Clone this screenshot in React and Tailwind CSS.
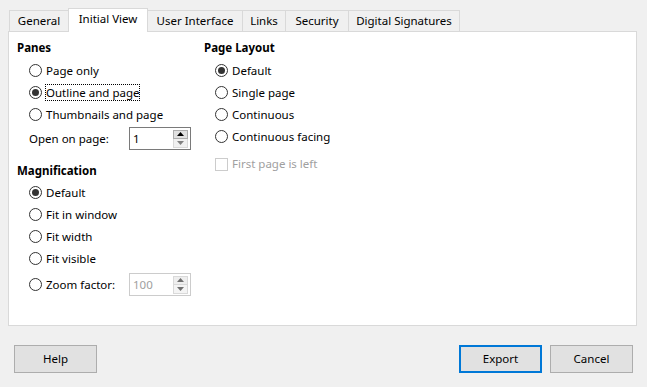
import React from "react";

const font = { fontFamily: '"Noto Sans", "Open Sans", sans-serif' };

function Radio({ label, checked, focus }) {
  return (
    <div className="flex items-center h-[22px]">
      <span className="w-[13px] h-[13px] rounded-full border border-[#333333] bg-white flex items-center justify-center shrink-0">
        {checked && <span className="w-[7px] h-[7px] rounded-full bg-[#333333]" />}
      </span>
      <span className={"ml-[4px] leading-[15px] text-black " + (focus ? "outline outline-1 outline-dotted outline-black" : "")}>{label}</span>
    </div>
  );
}

function Spin({ value, disabled }) {
  return (
    <div className={"w-[62px] h-[23px] border bg-white flex items-center pl-[3px] pr-[2px] " + (disabled ? "border-[#cccccc] text-[#a0a0a0]" : "border-[#7a7a7a] text-black")}>
      <span className="flex-1 leading-none">{value}</span>
      <div className="flex flex-col w-[15px]">
        <div className={"h-[9px] border flex items-center justify-center " + (disabled ? "border-[#d9d9d9] bg-[#eeeeee]" : "border-[#adadad] bg-[#e1e1e1]")}>
          <svg width="7" height="4" viewBox="0 0 7 4"><path d="M0 4 L3.5 0 L7 4Z" fill={disabled ? "#707070" : "#000"} /></svg>
        </div>
        <div className={"h-[9px] border border-t-0 flex items-center justify-center " + (disabled ? "border-[#d9d9d9] bg-[#f4f4f4]" : "border-[#d9d9d9] bg-[#f0f0f0]")}>
          <svg width="7" height="4" viewBox="0 0 7 4"><path d="M0 0 L7 0 L3.5 4Z" fill={disabled ? "#707070" : "#808080"} /></svg>
        </div>
      </div>
    </div>
  );
}

function Tab({ label, w, selected, first }) {
  if (selected) {
    return (
      <div className="h-[24px] -mb-px bg-white border border-b-0 border-[#d9d9d9] -ml-px flex items-center justify-center pb-[3px] relative z-20" style={{ width: w }}>
        {label}
      </div>
    );
  }
  return (
    <div className={"h-[21px] bg-[#f0f0f0] border border-b-0 border-[#d9d9d9] flex items-center justify-center " + (first ? "" : "-ml-px")} style={{ width: w }}>
      {label}
    </div>
  );
}

export default function App() {
  return (
    <div className="w-[647px] h-[387px] bg-[#f0f0f0] pt-[8px] text-[11.5px] text-black overflow-hidden" style={font}>
      <div className="flex items-end pl-[9px] h-[23px] relative z-10">
        <Tab label="General" w={60} first />
        <Tab label="Initial View" w={80} selected />
        <Tab label="User Interface" w={96} />
        <Tab label="Links" w={44} />
        <Tab label="Security" w={64} />
        <Tab label="Digital Signatures" w={112} />
      </div>
      <div className="ml-[8px] w-[629px] h-[295px] bg-white border border-[#d9d9d9] pt-[8px] pl-[8px] flex">
        <div className="w-[187px] flex flex-col">
          <div className="h-[16px] leading-[16px] font-bold">Panes</div>
          <div className="pl-[12px] mt-[3px]">
            <Radio label="Page only" />
            <Radio label="Outline and page" checked focus />
            <Radio label="Thumbnails and page" />
            <div className="flex items-center mt-[2px] h-[23px]">
              <span className="w-[100px]">Open on page:</span>
              <Spin value="1" />
            </div>
          </div>
          <div className="h-[16px] leading-[16px] font-bold mt-[13px]">Magnification</div>
          <div className="pl-[12px] mt-[2px]">
            <Radio label="Default" checked />
            <Radio label="Fit in window" />
            <Radio label="Fit width" />
            <Radio label="Fit visible" />
            <div className="flex items-center mt-[4px] h-[23px]">
              <span className="w-[100px] flex items-center">
                <span className="w-[13px] h-[13px] rounded-full border border-[#333333] bg-white shrink-0" />
                <span className="ml-[4px]">Zoom factor:</span>
              </span>
              <Spin value="100" disabled />
            </div>
          </div>
        </div>
        <div className="flex flex-col">
          <div className="h-[16px] leading-[16px] font-bold">Page Layout</div>
          <div className="pl-[11px] mt-[3px]">
            <Radio label="Default" checked />
            <Radio label="Single page" />
            <Radio label="Continuous" />
            <Radio label="Continuous facing" />
            <div className="flex items-center h-[22px] mt-[6px] text-[#a0a0a0]">
              <span className="w-[13px] h-[13px] border border-[#cccccc] bg-white shrink-0" />
              <span className="ml-[4px]">First page is left</span>
            </div>
          </div>
        </div>
      </div>
      <div className="flex mt-[19px] pl-[14px]">
        <button className="w-[83px] h-[28px] bg-[#e1e1e1] border border-[#adadad] text-black">Help</button>
        <div className="flex-1" />
        <button className="w-[83px] h-[28px] bg-[#e1e1e1] border-2 border-[#0078d7] text-black">Export</button>
        <button className="w-[83px] h-[28px] bg-[#e1e1e1] border border-[#adadad] text-black ml-[8px] mr-[14px]">Cancel</button>
      </div>
    </div>
  );
}
